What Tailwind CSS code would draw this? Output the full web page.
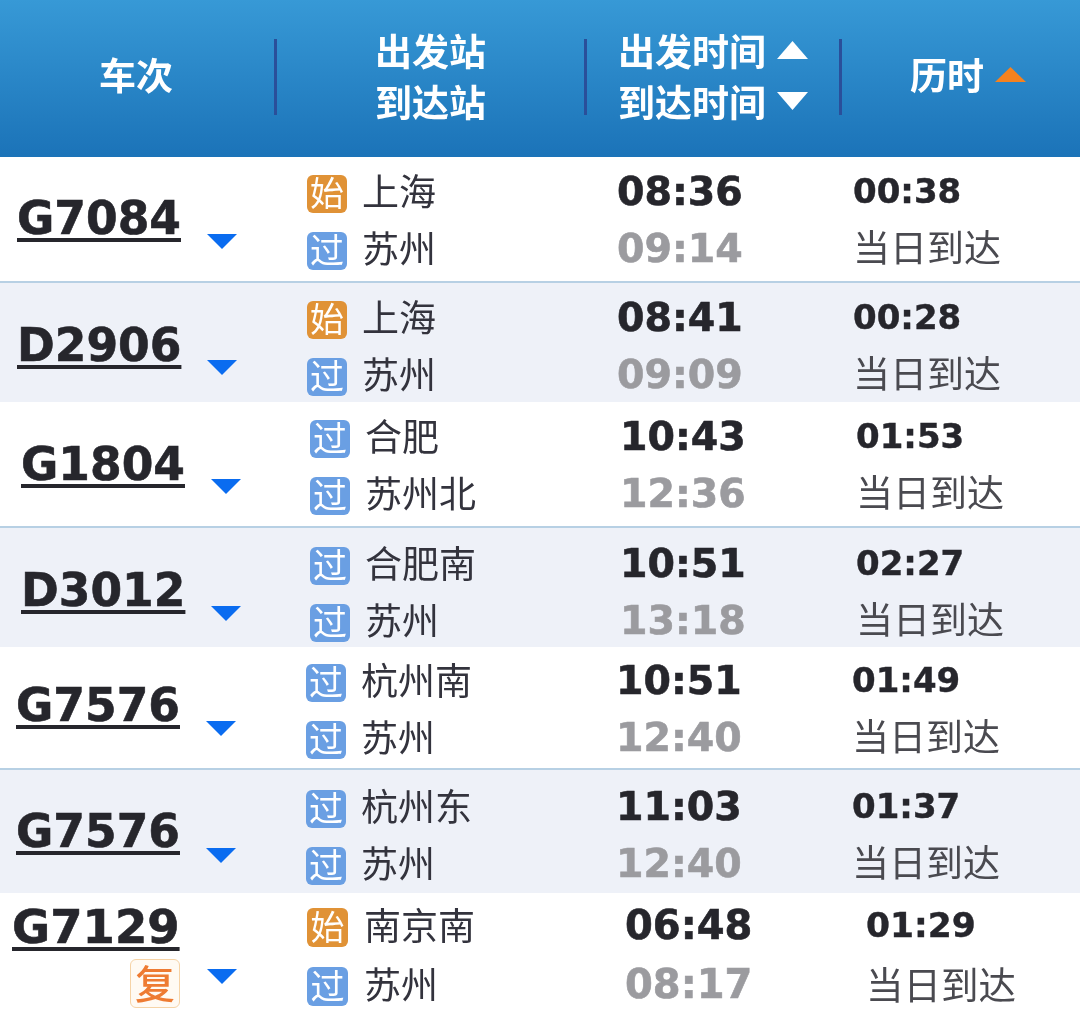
<!DOCTYPE html>
<html lang="zh-CN">
<head>
  <meta charset="UTF-8">
  <title>车次列表</title>
  <script src="https://cdn.jsdelivr.net/npm/@tailwindcss/browser@4"></script>
</head>
<body class="w-[1080px] h-[1024px] overflow-hidden bg-white font-['Noto_Sans_CJK_SC','Noto_Sans',sans-serif]">
<div class="blur-[0.4px]">

  <!-- Header -->
  <div class="flex items-center h-[157px] bg-gradient-to-b from-[#3799d6] to-[#1b73b8] text-white font-bold text-[37px] leading-[51px] pb-[4px]">
    <div class="w-[274px] text-center pr-[2px] mb-[4px]">车次</div>
    <div class="w-[3px] h-[76px] bg-[#2a4f9a]"></div>
    <div class="w-[307px] text-center mb-[2px]">
      <div>出发站</div>
      <div>到达站</div>
    </div>
    <div class="w-[3px] h-[76px] bg-[#2a4f9a]"></div>
    <div class="w-[252px] pl-[31px] mb-[2px]">
      <div class="flex items-center gap-[11px]">出发时间
        <svg width="31" height="19" viewBox="0 0 31 19"><polygon points="15.5,0 31,18 0,18" fill="#fff"/></svg>
      </div>
      <div class="flex items-center gap-[11px]">到达时间
        <svg width="31" height="19" viewBox="0 0 31 19"><polygon points="0,0 31,0 15.5,18" fill="#fff"/></svg>
      </div>
    </div>
    <div class="w-[3px] h-[76px] bg-[#2a4f9a]"></div>
    <div class="flex items-center gap-[11px] pl-[68px] mb-[4px]">历时
      <svg width="31" height="16" viewBox="0 0 31 16"><polygon points="15.5,0 31,15 0,15" fill="#f5821f"/></svg>
    </div>
  </div>

  <!-- Row 1 -->
  <div class="flex h-[126px] pl-[17px] pt-[6px] bg-white border-b-2 border-[#b7d0e4]">
    <div class="w-[290px] flex items-start pt-[30px]">
      <a class="w-[190px] font-['DejaVu_Sans'] font-bold text-[45.5px] leading-[52px] text-[#26262c] [-webkit-text-stroke:0.6px_#26262c] underline decoration-[4px] underline-offset-[4px]">G7084</a>
      <svg class="mt-[41px]" width="30" height="15" viewBox="0 0 30 15"><polygon points="0,0 30,0 15,15" fill="#0a6cf0"/></svg>
    </div>
    <div class="w-[310px] text-[37px] leading-[50px] text-[#33333d]">
      <div class="flex items-center gap-[15px] h-[57px]"><span class="w-[40px] h-[38px] mt-[4px] rounded-[6px] bg-[#e09236] text-white text-[34px] leading-[34px] text-center">始</span><span class="mb-[4px]">上海</span></div>
      <div class="flex items-center gap-[15px] h-[57px]"><span class="w-[40px] h-[38px] mt-[4px] rounded-[6px] bg-[#6a9fe3] text-white text-[34px] leading-[34px] text-center">过</span><span class="mb-[4px]">苏州</span></div>
    </div>
    <div class="w-[236px] font-['DejaVu_Sans'] font-bold text-[39.5px] leading-[57px] [-webkit-text-stroke:0.6px_currentColor]">
      <div class="text-[#26262c]">08:36</div>
      <div class="text-[#9b9b9f]">09:14</div>
    </div>
    <div class="text-[37px] leading-[57px] text-[#4a4a50]">
      <div class="font-['DejaVu_Sans'] font-bold text-[34px] text-[#26262c] [-webkit-text-stroke:0.4px_#26262c]">00:38</div>
      <div class="-mt-[2px]">当日到达</div>
    </div>
  </div>

  <!-- Row 2 -->
  <div class="flex h-[119px] pl-[17px] pt-[6px] bg-[#eef1f8]">
    <div class="w-[290px] flex items-start pt-[31px]">
      <a class="w-[190px] font-['DejaVu_Sans'] font-bold text-[45.5px] leading-[52px] text-[#26262c] [-webkit-text-stroke:0.6px_#26262c] underline decoration-[4px] underline-offset-[4px]">D2906</a>
      <svg class="mt-[40px]" width="30" height="15" viewBox="0 0 30 15"><polygon points="0,0 30,0 15,15" fill="#0a6cf0"/></svg>
    </div>
    <div class="w-[310px] text-[37px] leading-[50px] text-[#33333d]">
      <div class="flex items-center gap-[15px] h-[57px]"><span class="w-[40px] h-[38px] mt-[4px] rounded-[6px] bg-[#e09236] text-white text-[34px] leading-[34px] text-center">始</span><span class="mb-[4px]">上海</span></div>
      <div class="flex items-center gap-[15px] h-[57px]"><span class="w-[40px] h-[38px] mt-[4px] rounded-[6px] bg-[#6a9fe3] text-white text-[34px] leading-[34px] text-center">过</span><span class="mb-[4px]">苏州</span></div>
    </div>
    <div class="w-[236px] font-['DejaVu_Sans'] font-bold text-[39.5px] leading-[57px] [-webkit-text-stroke:0.6px_currentColor]">
      <div class="text-[#26262c]">08:41</div>
      <div class="text-[#9b9b9f]">09:09</div>
    </div>
    <div class="text-[37px] leading-[57px] text-[#4a4a50]">
      <div class="font-['DejaVu_Sans'] font-bold text-[34px] text-[#26262c] [-webkit-text-stroke:0.4px_#26262c]">00:28</div>
      <div class="-mt-[2px]">当日到达</div>
    </div>
  </div>

  <!-- Row 3 -->
  <div class="flex h-[126px] pl-[21px] pt-[6px] bg-white border-b-2 border-[#b7d0e4]">
    <div class="w-[289px] flex items-start pt-[31px]">
      <a class="w-[190px] font-['DejaVu_Sans'] font-bold text-[45.5px] leading-[52px] text-[#26262c] [-webkit-text-stroke:0.6px_#26262c] underline decoration-[4px] underline-offset-[4px]">G1804</a>
      <svg class="mt-[40px]" width="30" height="15" viewBox="0 0 30 15"><polygon points="0,0 30,0 15,15" fill="#0a6cf0"/></svg>
    </div>
    <div class="w-[310px] text-[37px] leading-[50px] text-[#33333d]">
      <div class="flex items-center gap-[15px] h-[57px]"><span class="w-[40px] h-[38px] mt-[4px] rounded-[6px] bg-[#6a9fe3] text-white text-[34px] leading-[34px] text-center">过</span><span class="mb-[4px]">合肥</span></div>
      <div class="flex items-center gap-[15px] h-[57px]"><span class="w-[40px] h-[38px] mt-[4px] rounded-[6px] bg-[#6a9fe3] text-white text-[34px] leading-[34px] text-center">过</span><span class="mb-[4px]">苏州北</span></div>
    </div>
    <div class="w-[236px] font-['DejaVu_Sans'] font-bold text-[39.5px] leading-[57px] [-webkit-text-stroke:0.6px_currentColor]">
      <div class="text-[#26262c]">10:43</div>
      <div class="text-[#9b9b9f]">12:36</div>
    </div>
    <div class="text-[37px] leading-[57px] text-[#4a4a50]">
      <div class="font-['DejaVu_Sans'] font-bold text-[34px] text-[#26262c] [-webkit-text-stroke:0.4px_#26262c]">01:53</div>
      <div class="-mt-[2px]">当日到达</div>
    </div>
  </div>

  <!-- Row 4 -->
  <div class="flex h-[119px] pl-[21px] pt-[7px] bg-[#eef1f8]">
    <div class="w-[289px] flex items-start pt-[30px]">
      <a class="w-[190px] font-['DejaVu_Sans'] font-bold text-[45.5px] leading-[52px] text-[#26262c] [-webkit-text-stroke:0.6px_#26262c] underline decoration-[4px] underline-offset-[4px]">D3012</a>
      <svg class="mt-[41px]" width="30" height="15" viewBox="0 0 30 15"><polygon points="0,0 30,0 15,15" fill="#0a6cf0"/></svg>
    </div>
    <div class="w-[310px] text-[37px] leading-[50px] text-[#33333d]">
      <div class="flex items-center gap-[15px] h-[57px]"><span class="w-[40px] h-[38px] mt-[4px] rounded-[6px] bg-[#6a9fe3] text-white text-[34px] leading-[34px] text-center">过</span><span class="mb-[4px]">合肥南</span></div>
      <div class="flex items-center gap-[15px] h-[57px]"><span class="w-[40px] h-[38px] mt-[4px] rounded-[6px] bg-[#6a9fe3] text-white text-[34px] leading-[34px] text-center">过</span><span class="mb-[4px]">苏州</span></div>
    </div>
    <div class="w-[236px] font-['DejaVu_Sans'] font-bold text-[39.5px] leading-[57px] [-webkit-text-stroke:0.6px_currentColor]">
      <div class="text-[#26262c]">10:51</div>
      <div class="text-[#9b9b9f]">13:18</div>
    </div>
    <div class="text-[37px] leading-[57px] text-[#4a4a50]">
      <div class="font-['DejaVu_Sans'] font-bold text-[34px] text-[#26262c] [-webkit-text-stroke:0.4px_#26262c]">02:27</div>
      <div class="-mt-[2px]">当日到达</div>
    </div>
  </div>

  <!-- Row 5 -->
  <div class="flex h-[123px] pl-[16px] pt-[5px] bg-white border-b-2 border-[#b7d0e4]">
    <div class="w-[290px] flex items-start pt-[28px]">
      <a class="w-[190px] font-['DejaVu_Sans'] font-bold text-[45.5px] leading-[52px] text-[#26262c] [-webkit-text-stroke:0.6px_#26262c] underline decoration-[4px] underline-offset-[4px]">G7576</a>
      <svg class="mt-[41px]" width="30" height="15" viewBox="0 0 30 15"><polygon points="0,0 30,0 15,15" fill="#0a6cf0"/></svg>
    </div>
    <div class="w-[310px] text-[37px] leading-[50px] text-[#33333d]">
      <div class="flex items-center gap-[15px] h-[57px]"><span class="w-[40px] h-[38px] mt-[4px] rounded-[6px] bg-[#6a9fe3] text-white text-[34px] leading-[34px] text-center">过</span><span class="mb-[4px]">杭州南</span></div>
      <div class="flex items-center gap-[15px] h-[57px]"><span class="w-[40px] h-[38px] mt-[4px] rounded-[6px] bg-[#6a9fe3] text-white text-[34px] leading-[34px] text-center">过</span><span class="mb-[4px]">苏州</span></div>
    </div>
    <div class="w-[236px] font-['DejaVu_Sans'] font-bold text-[39.5px] leading-[57px] [-webkit-text-stroke:0.6px_currentColor]">
      <div class="text-[#26262c]">10:51</div>
      <div class="text-[#9b9b9f]">12:40</div>
    </div>
    <div class="text-[37px] leading-[57px] text-[#4a4a50]">
      <div class="font-['DejaVu_Sans'] font-bold text-[34px] text-[#26262c] [-webkit-text-stroke:0.4px_#26262c]">01:49</div>
      <div class="-mt-[2px]">当日到达</div>
    </div>
  </div>

  <!-- Row 6 -->
  <div class="flex h-[123px] pl-[16px] pt-[8px] bg-[#eef1f8]">
    <div class="w-[290px] flex items-start pt-[28px]">
      <a class="w-[190px] font-['DejaVu_Sans'] font-bold text-[45.5px] leading-[52px] text-[#26262c] [-webkit-text-stroke:0.6px_#26262c] underline decoration-[4px] underline-offset-[4px]">G7576</a>
      <svg class="mt-[42px]" width="30" height="15" viewBox="0 0 30 15"><polygon points="0,0 30,0 15,15" fill="#0a6cf0"/></svg>
    </div>
    <div class="w-[310px] text-[37px] leading-[50px] text-[#33333d]">
      <div class="flex items-center gap-[15px] h-[57px]"><span class="w-[40px] h-[38px] mt-[4px] rounded-[6px] bg-[#6a9fe3] text-white text-[34px] leading-[34px] text-center">过</span><span class="mb-[4px]">杭州东</span></div>
      <div class="flex items-center gap-[15px] h-[57px]"><span class="w-[40px] h-[38px] mt-[4px] rounded-[6px] bg-[#6a9fe3] text-white text-[34px] leading-[34px] text-center">过</span><span class="mb-[4px]">苏州</span></div>
    </div>
    <div class="w-[236px] font-['DejaVu_Sans'] font-bold text-[39.5px] leading-[57px] [-webkit-text-stroke:0.6px_currentColor]">
      <div class="text-[#26262c]">11:03</div>
      <div class="text-[#9b9b9f]">12:40</div>
    </div>
    <div class="text-[37px] leading-[57px] text-[#4a4a50]">
      <div class="font-['DejaVu_Sans'] font-bold text-[34px] text-[#26262c] [-webkit-text-stroke:0.4px_#26262c]">01:37</div>
      <div class="-mt-[2px]">当日到达</div>
    </div>
  </div>

  <!-- Row 7 -->
  <div class="flex h-[131px] pl-[12px] pt-[3px] bg-white">
    <div class="w-[295px] flex items-start pt-[5px]">
      <div class="w-[195px]">
        <a class="block w-fit font-['DejaVu_Sans'] font-bold text-[46.5px] leading-[52px] text-[#26262c] [-webkit-text-stroke:0.6px_#26262c] underline decoration-[4px] underline-offset-[4px]">G7129</a>
        <div class="flex justify-end w-[168px] mt-[6px]">
          <span class="w-[50px] h-[49px] rounded-[6px] border border-[#f6d3a6] bg-[#fffaf3] text-[#ee7b32] font-medium text-[40px] leading-[44px] text-center">复</span>
        </div>
      </div>
      <svg class="mt-[68px]" width="30" height="15" viewBox="0 0 30 15"><polygon points="0,0 30,0 15,15" fill="#0a6cf0"/></svg>
    </div>
    <div class="w-[318px] text-[37px] leading-[50px] text-[#33333d]">
      <div class="flex items-center gap-[16px] h-[59px]"><span class="w-[41px] h-[39px] mt-[4px] rounded-[6px] bg-[#e09236] text-white text-[34px] leading-[35px] text-center">始</span><span class="mb-[4px]">南京南</span></div>
      <div class="flex items-center gap-[16px] h-[59px]"><span class="w-[41px] h-[39px] mt-[4px] rounded-[6px] bg-[#6a9fe3] text-white text-[34px] leading-[35px] text-center">过</span><span class="mb-[4px]">苏州</span></div>
    </div>
    <div class="w-[241px] font-['DejaVu_Sans'] font-bold text-[40px] leading-[59px] [-webkit-text-stroke:0.6px_currentColor]">
      <div class="text-[#26262c]">06:48</div>
      <div class="text-[#9b9b9f]">08:17</div>
    </div>
    <div class="text-[37.5px] leading-[59px] text-[#4a4a50]">
      <div class="font-['DejaVu_Sans'] font-bold text-[34.5px] text-[#26262c] [-webkit-text-stroke:0.4px_#26262c]">01:29</div>
      <div class="-mt-[2px]">当日到达</div>
    </div>
  </div>

</div>
</body>
</html>
